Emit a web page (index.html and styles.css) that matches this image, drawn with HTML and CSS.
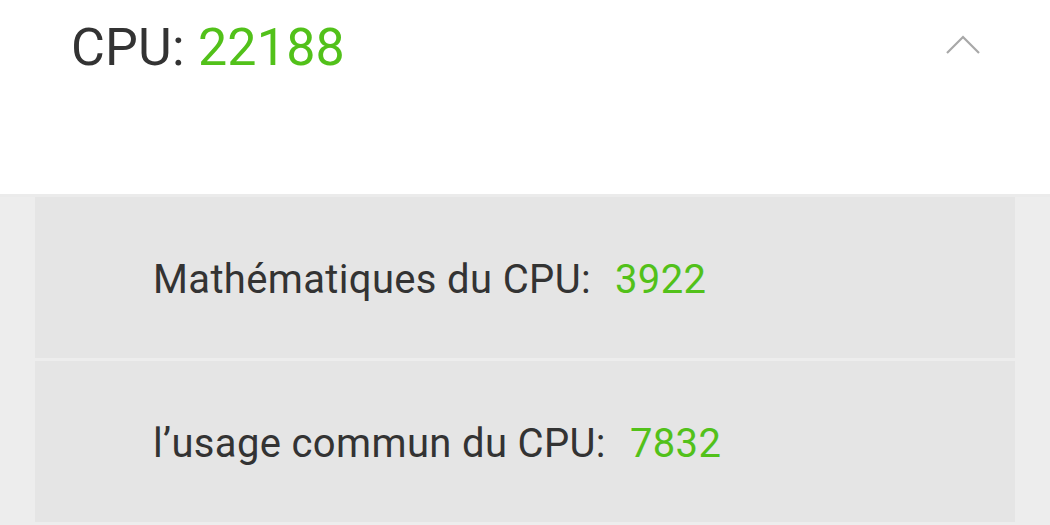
FILE: index.html
```html
<!DOCTYPE html>
<html>
<head>
<meta charset="utf-8">
<link rel="stylesheet" href="styles.css">
</head>
<body>
<div class="page">
  <header class="head">
    <div class="title">CPU: <span class="green">22188</span></div>
    <svg class="chev" width="36" height="20" viewBox="0 0 36 20"><path d="M1 18 L17 2 L33 18" fill="none" stroke="#a8a8a8" stroke-width="2.2"/></svg>
  </header>
  <div class="list">
    <div class="row"><span class="label">Mathématiques du CPU:</span><span class="val">3922</span></div>
    <div class="row"><span class="label">l’usage commun du CPU:</span><span class="val">7832</span></div>
  </div>
</div>
</body>
</html>
```
FILE: styles.css
```css
html, body { margin: 0; padding: 0; }
body { width: 1050px; height: 525px; overflow: hidden; background: #ededed; font-family: Roboto, "Noto Sans", sans-serif; }
.page { display: flex; flex-direction: column; }
.head { background: #fff; height: 194px; border-bottom: 3px solid #ebebeb; box-sizing: content-box; display: flex; align-items: flex-start; justify-content: space-between; padding: 0 68px 0 71px; }
.title { font-size: 52px; color: #333; margin-top: 17px; line-height: 62px; letter-spacing: 0.2px; }
.green { color: #52c11a; }
.chev { margin-top: 35px; }
.list { display: flex; flex-direction: column; gap: 3px; padding: 0 35px; }
.row { background: #e5e5e5; height: 161px; display: flex; align-items: center; padding: 4px 0 0 118px; box-sizing: border-box; font-size: 40px; letter-spacing: 0.35px; color: #333; }
.row .val { color: #52c11a; margin-left: 24px; }
```
